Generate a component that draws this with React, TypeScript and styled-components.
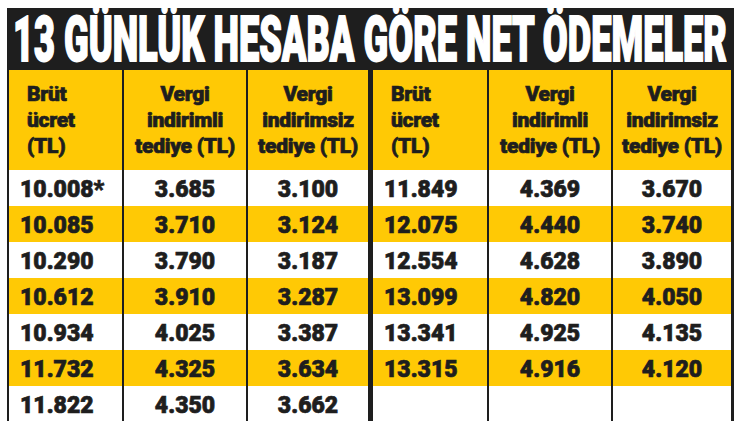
import React, { useLayoutEffect, useRef, useState } from "react";
import styled, { createGlobalStyle } from "styled-components";

const GlobalStyle = createGlobalStyle`
  html, body { margin: 0; padding: 0; background: #ffffff; }
  body { font-family: Roboto, "Liberation Sans", sans-serif; }
`;

const YELLOW = "#ffc905";
const INK = "#1e1e1e";

const Page = styled.div`
  padding: 8px 0 0 7px;
  width: 750px;
  box-sizing: border-box;
`;

const Panel = styled.div`
  width: 727px;
  display: flex;
  flex-direction: column;
`;

const Banner = styled.div`
  height: 62px;
  background: ${INK};
  display: flex;
  align-items: center;
  padding-left: 6px;
`;

const Title = styled.h1`
  margin: 0;
  flex: none;
  font-family: Roboto, "Liberation Sans", sans-serif;
  font-weight: 900;
  font-size: 63px;
  line-height: 1;
  color: #ffffff;
  -webkit-text-stroke: 1.8px #ffffff;
  white-space: nowrap;
  transform-origin: left center;
`;

const Table = styled.div`
  display: grid;
  grid-template-columns: 115px 124px 122px 119px 124px 123px;
  grid-template-rows: 100px;
  grid-auto-rows: 36px;
`;

const borderFor = (col: number) => (col === 3 ? 5 : 2);

const Cell = styled.div<{ $col: number; $stripe: boolean; $align: "left" | "center"; $head?: boolean }>`
  box-sizing: border-box;
  border-left: ${(p) => borderFor(p.$col)}px solid ${INK};
  border-right: ${(p) => (p.$col === 5 ? 3 : 0)}px solid ${INK};
  background: ${(p) => (p.$stripe ? YELLOW : "#ffffff")};
  display: flex;
  align-items: center;
  justify-content: ${(p) => (p.$align === "left" ? "flex-start" : "center")};
  text-align: ${(p) => p.$align};
  padding-left: ${(p) => (p.$align === "left" ? (p.$head ? 18 : 11) : 0)}px;
  padding-top: ${(p) => (p.$head ? 0 : 3)}px;
  color: ${INK};
  font-family: Roboto, "Liberation Sans", sans-serif;
  font-weight: 900;
`;

const HeadText = styled.span`
  font-size: 21px;
  line-height: 26px;
  letter-spacing: -0.3px;
  -webkit-text-stroke: 0.7px ${INK};
`;

const Value = styled.span`
  font-size: 23px;
  line-height: 1;
  -webkit-text-stroke: 0.7px ${INK};
`;

const headers = [
  ["Brüt", "ücret", "(TL)"],
  ["Vergi", "indirimli", "tediye (TL)"],
  ["Vergi", "indirimsiz", "tediye (TL)"],
];

const left = [
  ["10.008*", "3.685", "3.100"],
  ["10.085", "3.710", "3.124"],
  ["10.290", "3.790", "3.187"],
  ["10.612", "3.910", "3.287"],
  ["10.934", "4.025", "3.387"],
  ["11.732", "4.325", "3.634"],
  ["11.822", "4.350", "3.662"],
];

const right = [
  ["11.849", "4.369", "3.670"],
  ["12.075", "4.440", "3.740"],
  ["12.554", "4.628", "3.890"],
  ["13.099", "4.820", "4.050"],
  ["13.341", "4.925", "4.135"],
  ["13.315", "4.916", "4.120"],
  ["", "", ""],
];

function FitTitle({ text, width }: { text: string; width: number }) {
  const ref = useRef<HTMLHeadingElement>(null);
  const [fit, setFit] = useState({ scale: 1, natural: 0 });
  useLayoutEffect(() => {
    if (ref.current) {
      const w = ref.current.scrollWidth;
      if (w > 0) setFit({ scale: width / w, natural: w });
    }
  }, [text, width]);
  return (
    <Title
      ref={ref}
      style={{
        transform: `scaleX(${fit.scale})`,
        marginRight: fit.natural ? `${width - fit.natural}px` : undefined,
      }}
    >
      {text}
    </Title>
  );
}

export default function App() {
  const rows = left.map((l, i) => [...l, ...right[i]]);
  return (
    <>
      <GlobalStyle />
      <Page>
        <Panel>
          <Banner>
            <FitTitle text="13 GÜNLÜK HESABA GÖRE NET ÖDEMELER" width={714} />
          </Banner>
          <Table>
            {[...headers, ...headers].map((h, c) => (
              <Cell key={`h${c}`} $col={c} $stripe $head $align={c % 3 === 0 ? "left" : "center"}>
                <HeadText>
                  {h[0]}
                  <br />
                  {h[1]}
                  <br />
                  {h[2]}
                </HeadText>
              </Cell>
            ))}
            {rows.map((r, ri) =>
              r.map((v, c) => (
                <Cell key={`${ri}-${c}`} $col={c} $stripe={ri % 2 === 1 && v !== ""} $align={c % 3 === 0 ? "left" : "center"}>
                  <Value>{v}</Value>
                </Cell>
              ))
            )}
          </Table>
        </Panel>
      </Page>
    </>
  );
}
